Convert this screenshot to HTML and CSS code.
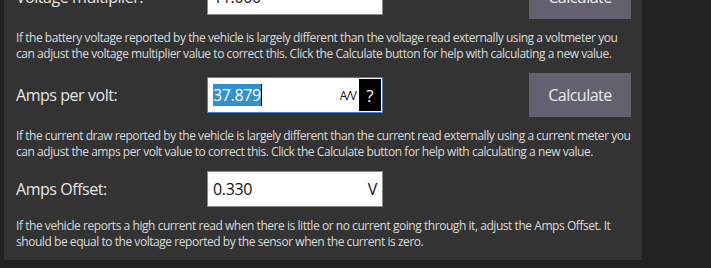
FILE: index.html
```html
<!DOCTYPE html>
<html>
<head>
<meta charset="utf-8">
<link rel="stylesheet" href="styles.css">
</head>
<body>
<div class="page">
  <div class="panel">
    <div class="setting">
      <div class="row">
        <div class="label">Voltage multiplier:</div>
        <div class="field">
          <span class="value">11.000</span>
        </div>
        <button class="calc">Calculate</button>
      </div>
      <p class="desc">If the battery voltage reported by the vehicle is largely different than the voltage read externally using a voltmeter you can adjust the voltage multiplier value to correct this. Click the Calculate button for help with calculating a new value.</p>
    </div>
    <div class="setting">
      <div class="row">
        <div class="label">Amps per volt:</div>
        <div class="field focused">
          <span class="value selected">37.879</span><span class="caret"></span>
          <span class="unit small">A/V</span>
          <span class="help">?</span>
        </div>
        <button class="calc">Calculate</button>
      </div>
      <p class="desc">If the current draw reported by the vehicle is largely different than the current read externally using a current meter you can adjust the amps per volt value to correct this. Click the Calculate button for help with calculating a new value.</p>
    </div>
    <div class="setting">
      <div class="row">
        <div class="label">Amps Offset:</div>
        <div class="field">
          <span class="value">0.330</span>
          <span class="unit">V</span>
        </div>
      </div>
      <p class="desc last">If the vehicle reports a high current read when there is little or no current going through it, adjust the Amps Offset. It should be equal to the voltage reported by the sensor when the current is zero.</p>
    </div>
  </div>
</div>
</body>
</html>
```
FILE: styles.css
```css
html, body {
  margin: 0;
  padding: 0;
  background: #222222;
  height: 100%;
  overflow: hidden;
}
.page {
  padding-left: 4px;
}
.panel {
  width: 638px;
  box-sizing: border-box;
  background: #333333;
  margin-top: -29px;
  padding: 4px 11px 0 12px;
  font-family: "Open Sans", sans-serif;
  color: #e2e2e2;
}
.setting {
  display: flex;
  flex-direction: column;
}
.row {
  display: flex;
  align-items: center;
}
.label {
  width: 191px;
  font-size: 16px;
  letter-spacing: -0.45px;
  color: #e6e6e6;
}
.field {
  width: 176px;
  height: 36px;
  box-sizing: border-box;
  background: #ffffff;
  border: 1px solid #8a8a8a;
  display: flex;
  align-items: center;
  padding: 1px 1px 1px 5px;
  color: #111;
  font-size: 16px;
  letter-spacing: -0.35px;
}
.field.focused {
  border-color: #4a80c4;
}
.value {
  flex: 0 0 auto;
  line-height: 22px;
}
.selected {
  background: #3390cf;
  color: #ffffff;
}
.caret {
  width: 1px;
  height: 22px;
  background: #000;
}
.unit {
  margin-left: auto;
  padding-right: 4px;
  font-size: 16px;
  color: #111;
}
.unit.small {
  font-size: 12px;
  letter-spacing: -1px;
  padding-right: 3px;
}
.help {
  width: 22px;
  align-self: stretch;
  background: #000000;
  color: #ffffff;
  display: flex;
  align-items: center;
  justify-content: center;
  font-size: 17px;
  letter-spacing: 0;
}
.calc {
  margin-left: auto;
  width: 102px;
  height: 44px;
  border: none;
  background: #63616f;
  color: #ececec;
  font-family: "Open Sans", sans-serif;
  font-size: 16px;
  letter-spacing: -0.5px;
  padding: 0;
}
.desc {
  margin: 11px 0 11px;
  font-size: 12px;
  letter-spacing: -0.45px;
  line-height: 16px;
  color: #dcdcdc;
}
.desc.last {
  margin-bottom: 10px;
}
```
